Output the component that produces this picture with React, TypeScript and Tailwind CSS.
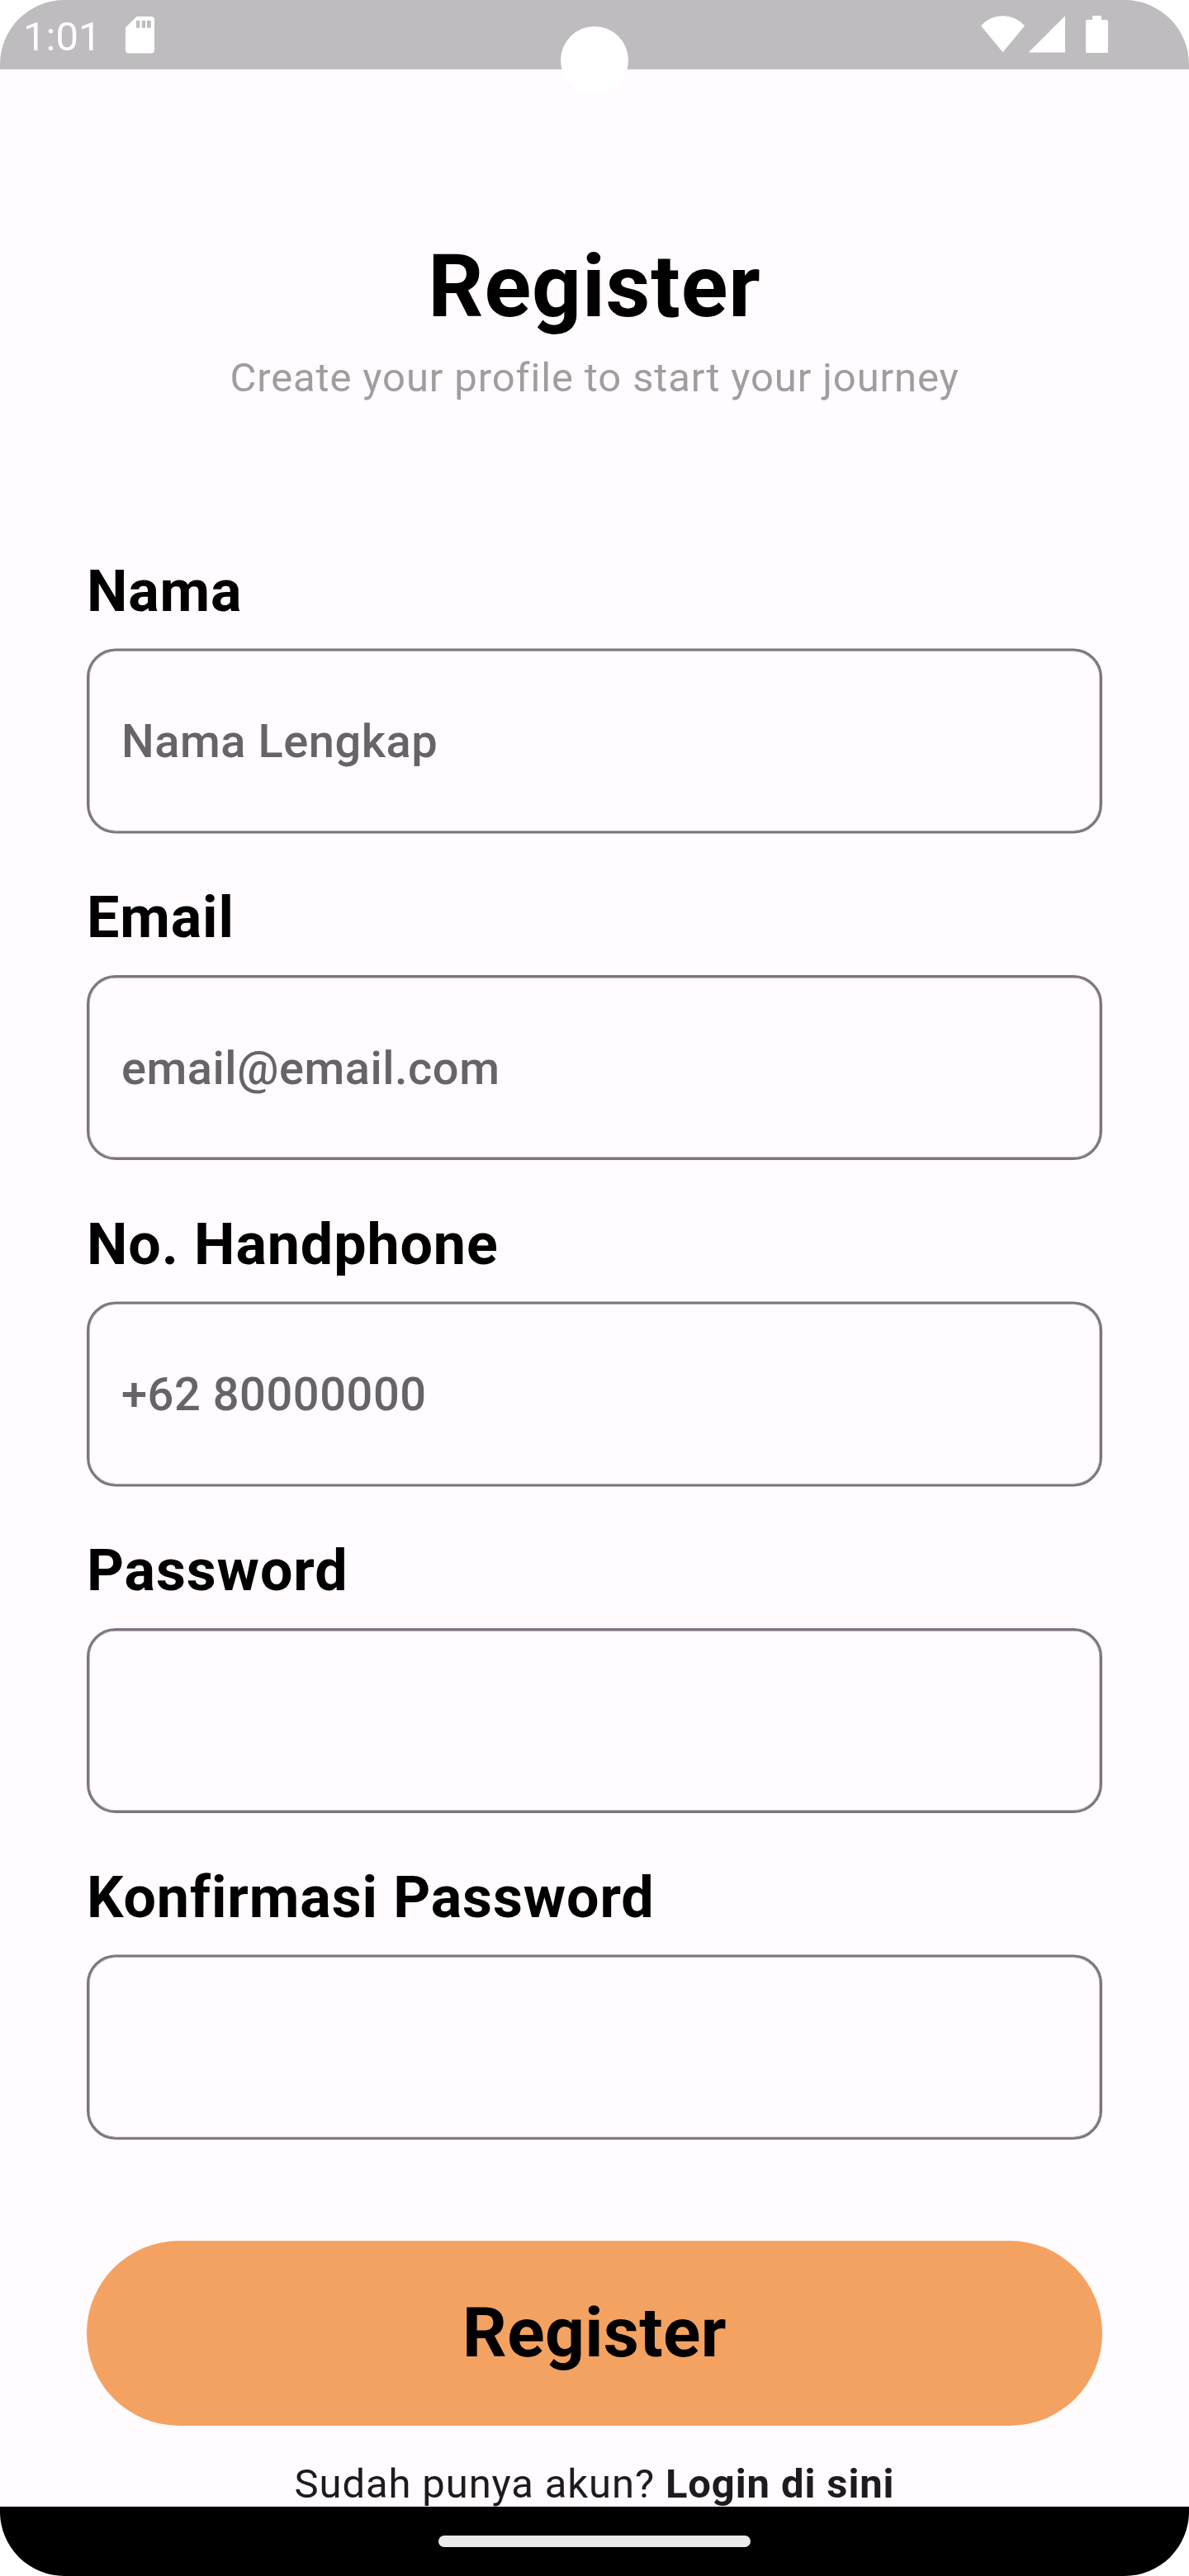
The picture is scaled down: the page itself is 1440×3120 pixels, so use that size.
type FieldProps = {
  label: string;
  placeholder?: string;
  half?: boolean;
};

const fields: FieldProps[] = [
  { label: "Nama", placeholder: "Nama Lengkap", half: true },
  { label: "Email", placeholder: "email@email.com" },
  { label: "No. Handphone", placeholder: "+62 80000000", half: true },
  { label: "Password" },
  { label: "Konfirmasi Password", half: true },
];

function SdCardIcon() {
  return (
    <svg className="h-[45px] w-[35px]" viewBox="0 0 35 45" fill="#fff">
      <path
        fillRule="evenodd"
        d="M13.5 0H31a4 4 0 0 1 4 4v36.6a4 4 0 0 1-4 4H4a4 4 0 0 1-4-4V13.3zM13 5v8.7h4.2V5zM19.8 5v8.7H24V5zM26 5v8.7h4.8V5z"
      />
    </svg>
  );
}

function WifiIcon() {
  return (
    <svg className="h-[45px] w-[53px]" viewBox="0 0 53 45" fill="#fff">
      <path d="M0 12.3A35 35 0 0 1 53 12.3L26.5 44.3z" />
    </svg>
  );
}

function SignalIcon() {
  return (
    <svg className="ml-[4px] h-[45px] w-[45px]" viewBox="0 0 45 45" fill="#fff">
      <path d="M45 .3V44.4H.5z" />
    </svg>
  );
}

function BatteryIcon() {
  return (
    <svg className="ml-[25px] h-[45px] w-[27px]" viewBox="0 0 27 45" fill="#fff">
      <path d="M8 0h11v5h6.5A1.5 1.5 0 0 1 27 6.500v37a1.5 1.5 0 0 1-1.5 1.5h-24A1.5 1.5 0 0 1 0 43.500v-37A1.5 1.5 0 0 1 1.500 5H8z" />
    </svg>
  );
}

function Field({ label, placeholder, half }: FieldProps) {
  return (
    <div className="flex flex-col">
      <label className="text-[70px] leading-[82px] font-bold tracking-[0.875px] text-black">{label}</label>
      <div
        className={
          "relative flex h-[224px] items-center px-[42px] pt-[2px] before:absolute before:inset-0 before:rounded-[35px] before:border-3 before:border-[#7c757f] before:shadow-[inset_0_0_0_0.5px_#7c757f] before:content-[''] " +
          (half ? "mt-[28px] before:translate-y-[0.5px]" : "mt-[29px]")
        }
      >
        <span className="text-[56px] leading-[66px] font-medium tracking-[0.525px] text-[#666466]">
          {placeholder}
        </span>
      </div>
    </div>
  );
}

export default function App() {
  return (
    <div className="h-[3120px] w-[1440px] bg-white font-[Roboto,sans-serif]">
      <div className="relative flex h-full flex-col overflow-hidden rounded-[78px] bg-[#fffbff]">
        <header className="flex h-[84px] shrink-0 items-start justify-between bg-[#bfbcbf] pr-[98px] pl-[28px]">
          <div className="flex items-start">
            <span className="mt-[16px] w-[124px] text-[49px] leading-[57px] text-white">1:01</span>
            <div className="mt-[20px]">
              <SdCardIcon />
            </div>
          </div>
          <div className="mt-[19px] flex">
            <WifiIcon />
            <SignalIcon />
            <BatteryIcon />
          </div>
        </header>
        <div className="absolute top-[32px] left-[679px] size-[82px] rounded-full bg-white" />

        <main className="flex min-h-0 flex-1 flex-col overflow-hidden px-[105px] pt-[202px]">
          <h1 className="text-center text-[105px] leading-[123px] font-bold tracking-[0.875px] text-black">
            Register
          </h1>
          <p className="mt-[20px] text-center text-[49px] leading-[57px] tracking-[0.875px] text-[#9e9e9e]">
            Create your profile to start your journey
          </p>
          <form className="mt-[189px] flex flex-col">
            <div className="flex flex-col gap-[61px]">
              {fields.map((f) => (
                <Field key={f.label} {...f} />
              ))}
            </div>
            <button
              type="button"
              className="mt-[123px] flex h-[224px] items-center justify-center rounded-full bg-[#f4a261] text-[84px] leading-[98px] font-bold tracking-[0.35px] text-black"
            >
              Register
            </button>
          </form>
          <p className="mt-[42px] shrink-0 text-center text-[49px] leading-[57px] tracking-[0.875px] text-[#1d1b1e]">
            Sudah punya akun? <span className="font-bold">Login di sini</span>
          </p>
        </main>

        <footer className="flex h-[84px] shrink-0 justify-center bg-black pt-[35px]">
          <div className="h-[14px] w-[378px] rounded-full bg-[#ebebeb]" />
        </footer>
      </div>
    </div>
  );
}
